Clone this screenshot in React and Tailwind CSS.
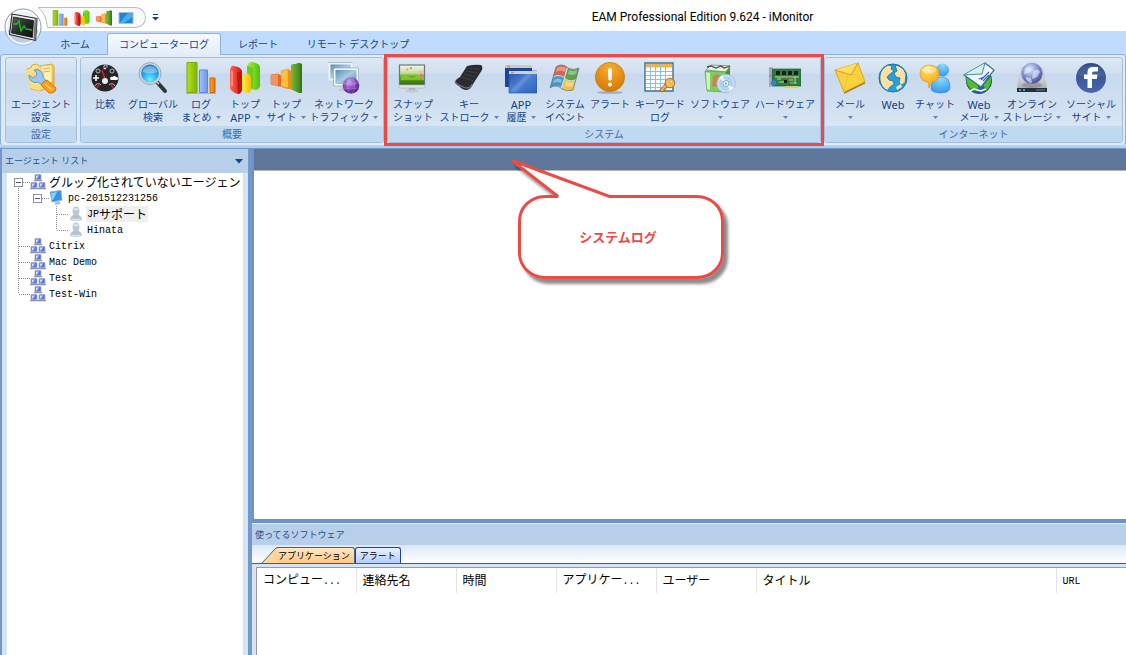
import React from "react";

const JP = "font-['Noto_Sans','Noto_Sans_CJK_JP',sans-serif]";

/* ---------- small drawings ---------- */

const Svg = ({ size = 32, children }) => (
  <svg width={size} height={size} viewBox="0 0 32 32" aria-hidden="true" className="block shrink-0">
    {children}
  </svg>
);

const Arrow = () => (
  <svg width="5" height="3" viewBox="0 0 5 3" aria-hidden="true" className="block shrink-0">
    <path d="M0 0h5L2.5 3z" fill="#6584b8" />
  </svg>
);

const Defs = () => (
  <svg width="0" height="0" className="absolute" aria-hidden="true">
    <defs>
      <linearGradient id="gGreen" x1="0" x2="1"><stop offset="0" stopColor="#b5e01b" /><stop offset="1" stopColor="#7db50a" /></linearGradient>
      <linearGradient id="gDkGreen" x1="0" x2="1"><stop offset="0" stopColor="#7cb83c" /><stop offset="1" stopColor="#3f8a1c" /></linearGradient>
      <linearGradient id="gBlue" x1="0" x2="1"><stop offset="0" stopColor="#a5c4f7" /><stop offset="1" stopColor="#6b96e8" /></linearGradient>
      <linearGradient id="gOrange" x1="0" x2="1"><stop offset="0" stopColor="#ffac33" /><stop offset="1" stopColor="#df6f00" /></linearGradient>
      <linearGradient id="gRed" x1="0" x2="1"><stop offset="0" stopColor="#ff6a55" /><stop offset="1" stopColor="#cf1010" /></linearGradient>
      <linearGradient id="gYellow" x1="0" x2="1"><stop offset="0" stopColor="#fff04a" /><stop offset="1" stopColor="#f0b800" /></linearGradient>
      <linearGradient id="gLime" x1="0" x2="1"><stop offset="0" stopColor="#a8f53c" /><stop offset="1" stopColor="#4fc00a" /></linearGradient>
      <linearGradient id="gFolder" x1="0" y1="0" x2="1" y2="1"><stop offset="0" stopColor="#fff0a0" /><stop offset="1" stopColor="#f2b630" /></linearGradient>
      <radialGradient id="gLens" cx=".5" cy=".8" r=".8"><stop offset="0" stopColor="#6ff0ff" /><stop offset=".5" stopColor="#2aa5ea" /><stop offset="1" stopColor="#1466bd" /></radialGradient>
      <linearGradient id="gScreen" x1="0" y1="0" x2="1" y2="1"><stop offset="0" stopColor="#4f86ad" /><stop offset=".5" stopColor="#a9cbe0" /><stop offset="1" stopColor="#4884a8" /></linearGradient>
      <linearGradient id="gWin" x1="0" y1="0" x2="1" y2="1"><stop offset="0" stopColor="#2b55ad" /><stop offset=".5" stopColor="#4b80d2" /><stop offset="1" stopColor="#2f61ba" /></linearGradient>
      <radialGradient id="gAlert" cx=".5" cy=".2" r=".9"><stop offset="0" stopColor="#f9ad2e" /><stop offset="1" stopColor="#cf7200" /></radialGradient>
      <radialGradient id="gPurple" cx=".4" cy=".3" r=".8"><stop offset="0" stopColor="#c9a6ef" /><stop offset=".6" stopColor="#7537a8" /><stop offset="1" stopColor="#3d1268" /></radialGradient>
      <radialGradient id="gGlobe" cx=".4" cy=".3" r=".8"><stop offset="0" stopColor="#e5ecff" /><stop offset=".55" stopColor="#7785c5" /><stop offset="1" stopColor="#343f80" /></radialGradient>
      <linearGradient id="gFb" x1="0" y1="0" x2="0" y2="1"><stop offset="0" stopColor="#2e4885" /><stop offset="1" stopColor="#4a68b0" /></linearGradient>
      <radialGradient id="gDisc" cx=".5" cy=".5" r=".5"><stop offset="0" stopColor="#e6f5ff" /><stop offset=".6" stopColor="#a9cdf3" /><stop offset="1" stopColor="#dcebfb" /></radialGradient>
      <radialGradient id="gPerson" cx=".5" cy=".1" r="1"><stop offset="0" stopColor="#8bdcff" /><stop offset="1" stopColor="#2b8fe8" /></radialGradient>
      <radialGradient id="gTalk" cx=".4" cy=".1" r="1"><stop offset="0" stopColor="#ffe36b" /><stop offset="1" stopColor="#f79b08" /></radialGradient>
      <linearGradient id="gHill" x1="0" y1="0" x2="0" y2="1"><stop offset="0" stopColor="#f3f6ea" /><stop offset=".4" stopColor="#c4dfa0" /><stop offset=".55" stopColor="#6cb51f" /><stop offset="1" stopColor="#2b6b08" /></linearGradient>
      <linearGradient id="gMetal" x1="0" y1="0" x2="0" y2="1"><stop offset="0" stopColor="#fafafa" /><stop offset="1" stopColor="#a8acb2" /></linearGradient>
      <linearGradient id="gDark" x1="0" y1="0" x2="1" y2="1"><stop offset="0" stopColor="#5a625e" /><stop offset=".5" stopColor="#252b28" /><stop offset="1" stopColor="#0c0f0d" /></linearGradient>
    </defs>
  </svg>
);

const FolderWrench = () => (
  <Svg>
    <path d="M2 7l4-1 1-3 5-1 2 2 13-2 2 2v19l-14 6-9-2z" fill="url(#gFolder)" stroke="#d79a22" strokeWidth=".8" />
    <path d="M16 4l11-1v17l-11 4z" fill="#fff2b4" stroke="#e0ad3a" strokeWidth=".6" />
    <path d="M18 7l7-1M18 10l7-1" stroke="#d9ac4a" />
    <path d="M1 8l18-1 2 18-7 4-9-3z" fill="#ffe07a" opacity=".9" />
    <path d="M9 8a6.500 6.500 0 0 1 9 7l4 5-4 4-5-4a6.500 6.500 0 0 1-9-7l4 3 4-3-1-3z" fill="#9cc6f5" stroke="#5a8ed0" strokeWidth=".9" />
    <path d="M16 23q2-4 6-5l9 8q0 4-4 5h-3z" fill="#f9a11b" stroke="#d47408" />
    <path d="M20 22l7 6" stroke="#ffd36b" strokeWidth="1.500" />
  </Svg>
);
const Gauge = () => (
  <Svg>
    <circle cx="16" cy="16" r="13.5" fill="#262627" />
    <g fill="none" stroke="#d8d8d8" strokeWidth=".8">
      <circle cx="9" cy="9" r="2" /><circle cx="23" cy="9" r="2" />
      <path d="M6 24a3.500 3.500 0 0 1 6-1M20 23a3.500 3.500 0 0 1 6 1M15 7V3.500l3-.5v3" />
    </g>
    <path d="M4 16h6M7 13v6" stroke="#fff" strokeWidth="1.600" />
    <path d="M22 18h6a1.500 1.500 0 0 0-1-3 2 2 0 0 0-3.500 0 1.500 1.500 0 0 0-1.500 3z" fill="#fff" />
    <path d="M8 26l2-4M24 26l-2-4M13 8l3 9" stroke="#e02020" strokeWidth="1.500" />
    <circle cx="16" cy="19" r="3" fill="#ececec" />
    <circle cx="16" cy="6.500" r="1" fill="#ddd" />
  </Svg>
);
const Magnifier = () => (
  <Svg>
    <path d="M20 20l8 9" stroke="#2f3438" strokeWidth="4" strokeLinecap="round" />
    <path d="M18 18l4 4" stroke="#b8bcc2" strokeWidth="2" />
    <circle cx="13" cy="11.500" r="10" fill="url(#gLens)" stroke="#cdd5dc" strokeWidth="2.200" />
    <circle cx="13" cy="11.500" r="11" fill="none" stroke="#7c8a97" strokeWidth=".6" />
    <path d="M5.500 10a7.700 7.700 0 0 1 15 0q-7 3-15 0z" fill="#fff" opacity=".35" />
  </Svg>
);
const Bars = ({ size }) => (
  <Svg size={size}>
    <path d="M2 .5h10v30H2z" fill="url(#gGreen)" stroke="#78a80a" />
    <path d="M14.500 8h8v22.500h-8z" fill="url(#gBlue)" stroke="#5c86d6" />
    <path d="M25 16h5v14.500h-5z" fill="url(#gOrange)" stroke="#cc6600" />
    <path d="M1 31.500h30" stroke="#7790a8" opacity=".5" />
  </Svg>
);
const Columns = ({ size }) => (
  <Svg size={size}>
    <path d="M18 4q1-4 5-4 7 1 8 5v19q-1 4-5 4-6-1-8-5z" fill="url(#gLime)" />
    <path d="M18 4q4 0 6 3v20q-5-2-6-5z" fill="#62c417" opacity=".8" />
    <path d="M13 15q1-4 4-4 5 1 5 5v12q-1 3-4 3-4-1-5-4z" fill="url(#gYellow)" />
    <path d="M1 8q1-5 4-4 7 1 8 5v19q-1 4-4 4-7-2-8-6z" fill="url(#gRed)" />
    <path d="M8 11q3-2 5 0v17q-1 3-4 4z" fill="#c21414" />
    <path d="M3 9v15" stroke="#ff9a88" strokeWidth="1.500" />
  </Svg>
);
const Steps = ({ size }) => (
  <Svg size={size}>
    <path d="M1 13l7-1 3 2v10l-3 0-7-2z" fill="#f0642c" stroke="#c84b1c" strokeWidth=".6" />
    <path d="M1 13l7-1v12l-7-2z" fill="#f7935c" />
    <path d="M11 9l7-2 3 2v18l-3 0-7-2z" fill="#e6921d" />
    <path d="M11 9l7-2v19l-7-2z" fill="#fbc142" stroke="#e09a20" strokeWidth=".5" />
    <path d="M21 3l9-2 2 1v29l-3 0-8-4z" fill="#35781a" />
    <path d="M21 3l9-2v30l-9-4z" fill="url(#gDkGreen)" />
  </Svg>
);
const Network = () => (
  <Svg>
    <rect x="1.500" y="1.500" width="22" height="16" rx="1" fill="url(#gScreen)" stroke="#eef3f7" strokeWidth="2" />
    <path d="M4 22l5-4 3 4z" fill="#b9c2ca" />
    <rect x="6.500" y="7" width="23" height="16" rx="1" fill="url(#gScreen)" stroke="#f1f5f8" strokeWidth="2" />
    <path d="M5.500 6h25v18h-25zM.5.500h24" fill="none" stroke="#8b9dac" strokeWidth=".6" />
    <path d="M10 29l5-5h6v5z" fill="#c3c9cf" />
    <circle cx="23" cy="23.500" r="8.300" fill="url(#gPurple)" />
    <g fill="none" stroke="#dcc0f5" strokeWidth=".5" opacity=".6">
      <ellipse cx="23" cy="23.500" rx="3.500" ry="8" /><path d="M15 21q8 3 16-1M15 26q8 2 15 0" />
    </g>
  </Svg>
);
const SnapScreen = () => (
  <Svg>
    <rect x="2.500" y="3" width="25" height="20" fill="url(#gHill)" stroke="#707579" strokeWidth="1.200" />
    <path d="M4 15q5-2 8 0t8-1 7 1v3H4z" fill="#9bd832" opacity=".6" />
    <path d="M10 6l2 1-2 2-1-1z" fill="#f2a27e" /><circle cx="14" cy="6" r="1" fill="#e86d5b" />
    <circle cx="24" cy="11" r="2.500" fill="#efb6c4" />
    <path d="M24 18v-6m-2 2l2-2 3 2" stroke="#d5607c" strokeWidth=".9" fill="none" />
    <path d="M2 23h26v3H2z" fill="#e4e6e8" stroke="#a6a9ac" strokeWidth=".6" />
    <path d="M12 26h6l1 3h-8z" fill="#aeb2b6" />
    <ellipse cx="15" cy="29" rx="7" ry="1.500" fill="#c5c9cd" />
  </Svg>
);
const Keyboard = () => (
  <Svg>
    <path d="M14 4q8-2 14-1 2 1 1 5l-9 14q-2 5-6 6-5 0-8-4-4-2-4-4 0-2 5-5z" fill="#292b2f" />
    <path d="M2 19q1 4 11 7 5 0 6-4" fill="none" stroke="#6d7278" strokeWidth="1.200" />
    <g stroke="#5a5e65" strokeWidth=".7" strokeDasharray="1.500 1">
      <path d="M15 6l11 1M13 9l12 2M11 12l12 3M9 15l12 4" />
    </g>
  </Svg>
);
const Windows = () => (
  <Svg>
    <path d="M0 3h27v22H0z" fill="#1c4599" />
    <path d="M0 3h27v3H0z" fill="#cfc9be" /><path d="M2 4.500h3" stroke="#e78c3a" strokeWidth="1.500" />
    <path d="M4 9h28v22H4z" fill="url(#gWin)" stroke="#24509f" strokeWidth=".6" />
    <path d="M4 9h28v3H4z" fill="#d5d0c7" /><path d="M6 10.500h3" stroke="#e78c3a" strokeWidth="1.500" />
    <path d="M5 29l16-17h6L11 30z" fill="#fff" opacity=".12" />
  </Svg>
);
const Flag = () => (
  <Svg>
    <path d="M7 5q5-4 11 0l-3 10q-6-4-11 0z" fill="#d9634c" />
    <path d="M19 6q5 3 11 0l-3 11q-6 3-11-1z" fill="#5da246" />
    <path d="M4 16q5-4 11 0l-3 9q-6-3-11 1z" fill="#4597c8" />
    <path d="M16 17q5 4 11 1l-3 10q-6 2-11-1z" fill="#f3c044" />
    <path d="M8 6q4-3 9 0l-1 4q-5-3-9 0zM20 8q4 2 8 0l-1 4q-4 2-8 0zM5 18q4-3 8 0l-1 3q-4-2-8 0zM17 19q4 3 8 1l-1 4q-4 1-8 0z" fill="#fff" opacity=".35" />
    <path d="M7 5q5-4 11 0l1 1q5 3 11 0l-6 22q-6 2-11-1l-1-1q-6-4-11 0z" stroke="#5c6f88" strokeWidth=".7" fill="none" />
  </Svg>
);
const Alert = () => (
  <Svg>
    <ellipse cx="16" cy="30.500" rx="13" ry="1.300" fill="#9badc2" />
    <circle cx="16" cy="15" r="14.600" fill="url(#gAlert)" stroke="#c77509" strokeWidth=".7" />
    <path d="M14.500 7h3l-.5 11h-2z" fill="#fff" stroke="#fff" strokeLinejoin="round" />
    <circle cx="16" cy="22.500" r="2" fill="#fff" />
  </Svg>
);
const SheetKey = () => (
  <Svg>
    <path d="M1 1h28v28H1z" fill="#fff" stroke="#38718f" strokeWidth="1.400" />
    <path d="M2 2h26v3.500H2z" fill="#fbb03b" />
    <path d="M2 9.500h26M2 13.500h26M2 17.500h26M2 21.500h26M2 25.500h26M6.500 2v26M11.500 2v26M16.500 2v26M21.500 2v26" stroke="#88bfe4" />
    <path d="M22 21l-6 7 1 2 3-1v-2h2v-2l3-2z" fill="#f6b24c" stroke="#a46a1c" />
    <circle cx="26" cy="21" r="4.800" fill="#f9bd5c" stroke="#a86e1e" />
    <circle cx="27.500" cy="19.500" r="1.500" fill="#fff" stroke="#a86e1e" strokeWidth=".6" />
  </Svg>
);
const SoftBox = () => (
  <Svg>
    <path d="M2 8l5-5 19 1-4 6z" fill="#e8f5e4" stroke="#7ea578" />
    <path d="M3 5l4-1 5 2 5-2 3 2 6-2" fill="none" stroke="#48514a" strokeWidth="1.300" />
    <path d="M1 9l21 1v20L3 29z" fill="#7cd05e" stroke="#52a53b" strokeWidth=".7" />
    <path d="M22 10l4-6v22l-4 4z" fill="#469736" />
    <path d="M2 10l4 1v17l-3-1z" fill="#cef3be" />
    <path d="M9 14q4-3 7-1l-2 12q-4-1-6 0z" fill="#e86d4a" opacity=".75" />
    <path d="M15 13h6l-1 8h-6z" fill="#68a4e2" />
    <circle cx="22" cy="21.500" r="9.200" fill="url(#gDisc)" stroke="#93afd2" strokeWidth=".7" />
    <path d="M22 21l-7-5 3-3zM23 22l7 4-4 3z" fill="#fff" opacity=".75" />
    <circle cx="22" cy="21.500" r="3" fill="#f0fafc" stroke="#79a7c0" />
    <circle cx="22" cy="21.500" r="1.200" fill="#7cc97a" />
  </Svg>
);
const Card = () => (
  <Svg>
    <path d="M1 6v19" stroke="#a7adb3" strokeWidth="2" />
    <path d="M3 7h29v17H3z" fill="#2f7d45" stroke="#1e5a30" strokeWidth=".7" />
    <path d="M16 24h13v2H16z" fill="#e3cf54" />
    <g fill="#181c1a"><path d="M7 9h4v4H7zM13 9h4v4h-4zM19 9h4v4h-4zM25 9h4v4h-4zM15 18h3v3h-3z" /></g>
    <path d="M6 15h24M8 17h4M20 18h4M26 15v7M12 20h3" stroke="#d8e58a" strokeWidth=".9" />
    <path d="M9 20h4M21 21h7" stroke="#7fd08b" strokeWidth=".9" />
    <path d="M20 15v2" stroke="#e24b3c" strokeWidth="2" />
    <circle cx="4.500" cy="21" r="2.700" fill="#2f83e8" />
    <path d="M0 6h4M0 14h3" stroke="#80868c" />
  </Svg>
);
const Mail = () => (
  <Svg>
    <path d="M1 8l23-7 7 19-21 10z" fill="#fbd13d" stroke="#dfa51d" />
    <path d="M1 8l16 5 7-12" fill="#fddc5e" stroke="#c08f22" strokeWidth=".8" />
    <path d="M10 30l4-18M30 20l-12-9" stroke="#e9bd35" strokeWidth=".7" />
    <path d="M10 30.500l21-10.500v1.500L10 32z" fill="#a97413" />
  </Svg>
);
const Globe = () => (
  <Svg>
    <circle cx="16" cy="16" r="14" fill="#1c90d1" />
    <path d="M16 2a14 14 0 1 0 14 14" fill="#2ba5e2" opacity=".7" />
    <path d="M3 14q1-8 8-11l4 1-1 3 3 2-4 3-3 3 2 3 4 1 1 3-4 3-3 4q-6-4-7-11z" fill="#fbe2a4" stroke="#13669e" strokeWidth=".7" />
    <path d="M18 3q8 1 11 9l-1 9-4 2-2-3 1-4-4-1-2-4 3-2-1-3z" fill="#fbe2a4" stroke="#13669e" strokeWidth=".7" />
    <path d="M19 25l5-3 1 3-5 3z" fill="#fbe2a4" />
    <circle cx="16" cy="16" r="14" fill="none" stroke="#1776b3" />
  </Svg>
);
const Chat = () => (
  <Svg>
    <circle cx="23.500" cy="8" r="6.500" fill="url(#gPerson)" />
    <path d="M12 27q0-12 11-12 8 0 8 10 0 6-9 6t-10-4z" fill="url(#gPerson)" stroke="#2583d3" strokeWidth=".5" />
    <path d="M1 12q0-8 9-9 10 0 10 9 0 7-7 8l-3 6-1-6q-8-1-8-8z" fill="url(#gTalk)" stroke="#e78d0b" strokeWidth=".6" />
    <ellipse cx="10" cy="8" rx="7" ry="3.500" fill="#fff" opacity=".45" />
  </Svg>
);
const WebMail = () => (
  <Svg>
    <circle cx="16" cy="19" r="12.500" fill="#315fc0" stroke="#1e3f91" />
    <path d="M3 14q4-2 8 2l5 7-2 6q-10 0-11-12zM20 23l8-9q2 9-5 15z" fill="#52bc39" stroke="#257925" strokeWidth=".7" />
    <path d="M1 13l21-12 9 7-13 17z" fill="#ecf7ff" stroke="#346c88" strokeWidth="1.200" />
    <path d="M1 13l18-1L22 1" fill="#d1f0ef" stroke="#4e8e95" />
    <path d="M18 18l8-8M20 19l6-6M16 17l5-2" stroke="#4060bb" strokeWidth="1.100" />
    <path d="M7 29l4-2 7 2 5-2" fill="none" stroke="#fff" strokeWidth="1.500" />
  </Svg>
);
const Storage = () => (
  <Svg>
    <path d="M6 6h20l5 21H1z" fill="url(#gMetal)" stroke="#b8bdc4" strokeWidth=".7" />
    <ellipse cx="16" cy="23" rx="10" ry="3" fill="#6c7283" opacity=".45" />
    <circle cx="16" cy="11.500" r="10.500" fill="url(#gGlobe)" stroke="#8a96be" strokeWidth=".6" />
    <path d="M9 7q4-4 6 0l-3 4-4 1zM17 10q5-5 7 0l-3 5-5 2zM10 15l5 1 1 5q-4 0-6-4z" fill="#e4e9ff" opacity=".65" />
    <path d="M1 26h30v4H1z" fill="#25303a" />
    <path d="M3 28h2M7 28h2" stroke="#35dbff" strokeWidth="1.500" />
    <path d="M20 28h9" stroke="#76828c" />
  </Svg>
);
const Facebook = () => (
  <Svg>
    <circle cx="16" cy="16" r="15" fill="url(#gFb)" />
    <path d="M2 12A15 15 0 0 1 30 12Q16 20 2 12z" fill="#fff" opacity=".08" />
    <path d="M12.500 26V17H9v-4.500h3.500V10q0-5 5.500-5h5v4.500h-4q-2 0-2 2v1h5.500l-.7 4.500H17v9z" fill="#fff" />
  </Svg>
);

const MiniScreen = () => (
  <Svg size={16}>
    <path d="M2 5h28v22H2z" fill="#1d86d8" stroke="#a7bccd" strokeWidth="2" />
    <path d="M3 26L20 6h9v8L12 26z" fill="#74c4f6" opacity=".6" />
  </Svg>
);
const Orb = () => (
  <svg width="38" height="38" viewBox="0 0 38 38" aria-hidden="true" className="block">
    <circle cx="19" cy="19" r="18" fill="#eef2f8" stroke="#8492ac" />
    <path d="M2 21a17 17 0 0 0 34 0q-17 6-34 0z" fill="#b9cce8" />
    <circle cx="19" cy="19" r="16.500" fill="none" stroke="#fff" strokeWidth="1.500" />
    <path d="M8 6l25 4.500-1.500 22L5.500 26.500z" fill="#f1f1f1" stroke="#2a2a2a" strokeWidth="1.200" strokeLinejoin="round" />
    <path d="M33 10.500l-1.500 22-2-1 1-20z" fill="#777" />
    <path d="M9.500 9l20 3.500-1 17L7.500 25z" fill="url(#gDark)" stroke="#111" strokeWidth=".8" />
    <path d="M9 16h4l2-3 2 10 3-5 2 3 6 1" fill="none" stroke="#18c41c" strokeWidth="1.300" />
  </svg>
);

/* ---------- ribbon ---------- */

const groups = [
  {
    title: "設定", width: "w-[72px]",
    items: [{ w: "w-[68px]", icon: FolderWrench, a: "エージェント", b: "設定" }],
  },
  {
    title: "概要", width: "w-[304px]",
    items: [
      { w: "w-[46px]", icon: Gauge, a: "比較" },
      { w: "w-[50px]", icon: Magnifier, a: "グローバル", b: "検索" },
      { w: "w-[46px]", icon: Bars, a: "ログ", b: "まとめ", menu: true },
      { w: "w-[42px]", icon: Columns, a: "トップ", b: "APP", menu: true },
      { w: "w-[40px]", icon: Steps, a: "トップ", b: "サイト", menu: true },
      { w: "w-[76px]", icon: Network, a: "ネットワーク", b: "トラフィック", menu: true },
    ],
  },
  {
    title: "システム", width: "w-[434px]", marked: true,
    items: [
      { w: "w-[48px]", icon: SnapScreen, a: "スナップ", b: "ショット" },
      { w: "w-[64px]", icon: Keyboard, a: "キー", b: "ストローク", menu: true },
      { w: "w-[40px]", icon: Windows, a: "APP", b: "履歴", menu: true },
      { w: "w-[48px]", icon: Flag, a: "システム", b: "イベント" },
      { w: "w-[42px]", icon: Alert, a: "アラート" },
      { w: "w-[58px]", icon: SheetKey, a: "キーワード", b: "ログ" },
      { w: "w-[62px]", icon: SoftBox, a: "ソフトウェア", menu: true },
      { w: "w-[68px]", icon: Card, a: "ハードウェア", menu: true },
    ],
  },
  {
    title: "インターネット", width: "w-[299px]",
    items: [
      { w: "w-[48px]", icon: Mail, a: "メール", menu: true },
      { w: "w-[38px]", icon: Globe, a: "Web" },
      { w: "w-[46px]", icon: Chat, a: "チャット", menu: true },
      { w: "w-[42px]", icon: WebMail, a: "Web", b: "メール", menu: true },
      { w: "w-[64px]", icon: Storage, a: "オンライン", b: "ストレージ", menu: true },
      { w: "w-[54px]", icon: Facebook, a: "ソーシャル", b: "サイト", menu: true },
    ],
  },
];

const isLatin = (s) => /^[A-Za-z]+$/.test(s);
const Label = ({ text }) => <span className={isLatin(text) ? "text-[11px]" : "text-[10px]"}>{text}</span>;

const RibbonButton = ({ item }) => {
  const Icon = item.icon;
  return (
    <button type="button" className={`flex shrink-0 flex-col items-center whitespace-nowrap leading-[13px] text-[#15428b] ${item.w}`}>
      <Icon />
      <span className="mt-1 flex h-[13px] items-center"><Label text={item.a} /></span>
      <span className="flex h-[13px] items-center gap-1">
        {item.b && <Label text={item.b} />}
        {item.menu && <Arrow />}
      </span>
    </button>
  );
};

const RibbonGroup = ({ group }) => (
  <section aria-label={group.title} className={`relative flex shrink-0 flex-col rounded-[3px] border border-[#a3bfdf] bg-[linear-gradient(to_bottom,#dee8f5_0%,#d1dff0_18%,#c8d9ed_19%,#dce9f6_100%)] ${group.width}`}>
    <div className="flex flex-1 px-px pt-1">
      {group.items.map((it, i) => <RibbonButton key={i} item={it} />)}
    </div>
    <h2 className="h-4 rounded-b-[2px] bg-[#c1d8f1] text-center text-[10px] leading-4 text-[#3e6aaa]">{group.title}</h2>
    {group.marked && <div className="pointer-events-none absolute -inset-x-1 -inset-y-1 border-[3px] border-[#e94b46]" />}
  </section>
);

/* ---------- agent tree ---------- */

const Cell = ({ kind }) => (
  <svg width="19" height="16" viewBox="0 0 19 16" aria-hidden="true" className="block shrink-0" shapeRendering="crispEdges">
    <g stroke="#8a8a8a" strokeDasharray="1 1" fill="none">
      {(kind === "mid" || kind === "line") && <path d="M7.500 0V16" />}
      {kind === "last" && <path d="M7.500 0V8" />}
      {kind === "first" && <path d="M7.500 8V16" />}
      {kind !== "line" && kind !== "none" && <path d="M8 8.500H19" />}
    </g>
    {(kind === "first" || kind === "open") && (
      <g>
        <rect x="3.500" y="4.500" width="8" height="8" fill="#fff" stroke="#919191" />
        <path d="M5 8.500h5" stroke="#3f4f9f" />
      </g>
    )}
  </svg>
);
const GroupIcon = () => (
  <svg width="16" height="16" viewBox="0 0 16 16" aria-hidden="true" className="block shrink-0">
    {[[4, 0], [0, 8], [8, 8]].map(([x, y]) => (
      <g key={`${x}-${y}`} transform={`translate(${x} ${y})`}>
        <rect x="1" y=".5" width="6" height="5" rx=".8" fill="#5a78dc" stroke="#a3a8c4" strokeWidth=".8" />
        <path d="M2 1.500h3l-2 3H2z" fill="#c9d8ff" />
        <path d="M0 6.500h8" stroke="#8f90a6" strokeWidth="1.500" />
      </g>
    ))}
  </svg>
);
const PcIcon = () => (
  <svg width="16" height="16" viewBox="0 0 16 16" aria-hidden="true" className="block shrink-0">
    <path d="M1 2l11-1.500 1 9.500-10 2z" fill="#2f94e4" stroke="#91aec6" strokeWidth=".8" />
    <path d="M2 3l6-1-4 8H3z" fill="#8ad1ff" />
    <path d="M6 12l4-1 2 3-6 1z" fill="#b4bdc7" />
  </svg>
);
const UserIcon = () => (
  <svg width="16" height="16" viewBox="0 0 16 16" aria-hidden="true" className="block shrink-0">
    <path d="M2 14q0-5 6-5.500 6 .5 6 5.500-6 1.500-12 0z" fill="#b4c1d1" />
    <ellipse cx="8" cy="5" rx="3.500" ry="4.500" fill="#bdc9d8" />
    <path d="M5 4q3-4 6 0z" fill="#e3e9f0" />
    <path d="M3 13q5 1 10 0" stroke="#e9eef4" fill="none" />
  </svg>
);

const tree = [
  { cells: ["first"], icon: GroupIcon, jp: "グルップ化されていないエージェン" },
  { cells: ["line", "open"], icon: PcIcon, en: "pc-201512231256" },
  { cells: ["line", "none", "mid"], icon: UserIcon, en: "JP", jp: "サポート", selected: true },
  { cells: ["line", "none", "last"], icon: UserIcon, en: "Hinata" },
  { cells: ["mid"], icon: GroupIcon, en: "Citrix" },
  { cells: ["mid"], icon: GroupIcon, en: "Mac Demo" },
  { cells: ["mid"], icon: GroupIcon, en: "Test" },
  { cells: ["last"], icon: GroupIcon, en: "Test-Win" },
];

const Mono = ({ children }) => <span className="font-['Liberation_Mono',monospace] text-[10px]">{children}</span>;

const AgentTree = () => (
  <ul role="tree" className="flex-1 overflow-hidden bg-white pl-1 pt-px text-black">
    {tree.map((n, i) => {
      const Icon = n.icon;
      return (
        <li key={i} role="treeitem" aria-selected={!!n.selected} className="flex h-4 items-center whitespace-nowrap leading-4">
          {n.cells.map((c, k) => <Cell key={k} kind={c} />)}
          <Icon />
          <span className={`ml-0.5 flex h-4 items-center px-px pt-0.5 text-[12px] ${n.selected ? "bg-[#efefef]" : ""}`}>
            {n.en && <Mono>{n.en}</Mono>}
            {n.jp}
          </span>
        </li>
      );
    })}
  </ul>
);

/* ---------- log table ---------- */

const columns = [
  { w: "w-[99px]", jp: "コンピュー", en: "..." },
  { w: "w-[100px]", jp: "連絡先名" },
  { w: "w-[100px]", jp: "時間" },
  { w: "w-[100px]", jp: "アプリケー", en: "..." },
  { w: "w-[100px]", jp: "ユーザー" },
  { w: "w-[300px]", jp: "タイトル" },
  { w: "w-auto", en: "URL" },
];

const Callout = () => (
  <div className="pointer-events-none absolute left-[508px] top-[156px]">
    <svg width="226" height="134" viewBox="508 156 226 134" aria-hidden="true" className="block">
      <defs>
        <filter id="soft" x="-10%" y="-10%" width="130%" height="130%">
          <feDropShadow dx="4" dy="5" stdDeviation="1.500" floodColor="#000" floodOpacity=".45" />
        </filter>
      </defs>
      <path filter="url(#soft)" d="M512 160.500L609.500 196.500H697A25.500 24.500 0 0 1 722.500 221V253A25.500 24.500 0 0 1 697 277.500H545A25.500 24.500 0 0 1 519.500 253V221A25.500 24.500 0 0 1 545 196.500H558Z" fill="#fff" stroke="#e94b46" strokeWidth="3" strokeMiterlimit="2" />
    </svg>
    <p className="absolute bottom-3 left-2 flex h-20 w-[204px] items-center justify-center text-[13px] font-bold text-[#e94b46]">システムログ</p>
  </div>
);

export default function App() {
  return (
    <div className={`relative flex min-h-screen flex-col overflow-hidden bg-[#7497ca] ${JP}`}>
      <Defs />

      <header className="flex h-[31px] items-center bg-white">
        <svg width="10" height="21" viewBox="0 0 10 21" aria-hidden="true" className="ml-[38px] mt-1 block shrink-0">
          <path d="M0 .5Q8 6 9.500 20.500H10V.5z" fill="#f7f9fc" />
          <path d="M10 .5H0Q8 6 9.500 20.500H10" fill="none" stroke="#b9bdc4" />
        </svg>
        <div className="mt-1 flex h-[21px] w-[98px] items-center gap-[6px] rounded-r-full border border-l-0 border-[#b9bdc4] bg-[#f7f9fc] pl-1">
          <button type="button" aria-label="ログまとめ"><Bars size={16} /></button>
          <button type="button" aria-label="トップAPP"><Columns size={16} /></button>
          <button type="button" aria-label="トップサイト"><Steps size={16} /></button>
          <button type="button" aria-label="デスクトップ"><MiniScreen /></button>
        </div>
        <button type="button" aria-label="カスタマイズ" className="ml-1.5 mt-1">
          <svg width="7" height="7" viewBox="0 0 7 7" aria-hidden="true" className="block"><path d="M1 .5h5" stroke="#15428b" /><path d="M0 3h7L3.500 6.500z" fill="#15428b" /></svg>
        </button>
        <h1 className="flex-1 pl-[120px] pt-0.5 text-center font-['Roboto',sans-serif] text-[12px] leading-4 text-black">EAM Professional Edition 9.624 - iMonitor</h1>
      </header>
      <div className="absolute left-1 top-2"><button type="button" aria-label="メニュー" className="block"><Orb /></button></div>

      <div className="bg-[#bfdbff]">
        <nav role="tablist" className="flex h-[23px] pl-[43px] text-[10px] text-[#15428b]">
          <button type="button" role="tab" className="w-16 pt-1">ホーム</button>
          <button type="button" role="tab" aria-selected="true" className="relative z-10 -mb-px mt-0.5 w-[114px] rounded-t-[3px] border border-b-0 border-[#8db2e3] bg-linear-to-b from-[#f6faff] to-[#e3edf9]">コンピューターログ</button>
          <button type="button" role="tab" className="w-[74px] pt-1">レポート</button>
          <button type="button" role="tab" className="w-[126px] pt-1">リモート デスクトップ</button>
        </nav>
        <div className="flex h-[92px] gap-[3px] rounded-[4px] border border-[#8db2e3] border-b-[#a5e0ee] bg-linear-to-b from-[#e1ecf8] to-[#dcebfa] py-0.5 pl-1">
          {groups.map((g) => <RibbonGroup key={g.title} group={g} />)}
        </div>
        <div className="h-[3px] border-b border-[#7497ca] bg-[#b0cdef]" />
      </div>

      <main className="flex flex-1">
        <aside className="ml-0.5 flex w-[246px] shrink-0 flex-col bg-[#d5e4f3]">
          <div className="flex h-6 items-center justify-between bg-[#b8cfea] pl-[3px] pr-1 text-[9px] text-[#1e4e96]">
            <h2>エージェント リスト</h2>
            <button type="button" aria-label="メニュー" className="p-px">
              <svg width="8" height="5" viewBox="0 0 8 5" aria-hidden="true" className="block"><path d="M0 0h8L4 4.500z" fill="#15428b" /></svg>
            </button>
          </div>
          <div className="flex flex-1 px-[5px]"><AgentTree /></div>
        </aside>

        <div className="ml-1 flex min-w-0 flex-1 flex-col bg-[#6c92c8]">
          <section className="ml-0.5 flex flex-1 flex-col bg-white">
            <div className="h-[22px] border-b border-[#b9b9b9] bg-[#5f769b]" />
          </section>
          <section className="mt-1 flex h-[132px] flex-col bg-[#d6e5f5]">
            <h2 className="h-[22px] border-t border-[#dce9f7] bg-[#b8cfea] pl-[3px] text-[9px] leading-[22px] text-[#1e4e96]">使ってるソフトウェア</h2>
            <div role="tablist" className="flex h-[19px] items-end border-b border-[#2f5fae] bg-linear-to-b from-[#dce8f8] to-white pl-2.5 text-[9px] text-black">
              <button type="button" role="tab" aria-selected="true" className="flex h-4">
                <svg width="16" height="16" viewBox="0 0 16 16" aria-hidden="true" className="block"><path d="M0 16L13 2q1-1.500 3-1.500V16z" fill="#ffd59c" /><path d="M0 16L13 2q1-1.500 3-1.500" fill="none" stroke="#44618f" /></svg>
                <span className="h-4 rounded-tr-[3px] border-r border-t border-[#44618f] bg-linear-to-b from-[#ffe6c2] to-[#ffc883] pr-1 leading-4">アプリケーション</span>
              </button>
              <button type="button" role="tab" className="h-4 rounded-t-[3px] border border-b-0 border-[#1d449b] bg-linear-to-b from-[#eaf2ff] to-[#b3cdfa] px-1 leading-4">アラート</button>
            </div>
            <div className="ml-1 mt-[3px] flex-1 overflow-hidden border-l border-t border-[#9a9a9a] bg-white">
              <table className="w-full table-fixed border-collapse text-left text-[12px] text-black">
                <thead>
                  <tr className="h-[25px]">
                    {columns.map((c, i) => (
                      <th key={i} scope="col" className={`whitespace-nowrap border-r border-[#e2e2e2] p-0 pl-[6px] font-normal leading-4 last:border-r-0 ${c.w}`}>
                        {c.jp}{c.en && <Mono>{c.en}</Mono>}
                      </th>
                    ))}
                  </tr>
                </thead>
                <tbody />
              </table>
            </div>
          </section>
        </div>
      </main>

      <Callout />
    </div>
  );
}
